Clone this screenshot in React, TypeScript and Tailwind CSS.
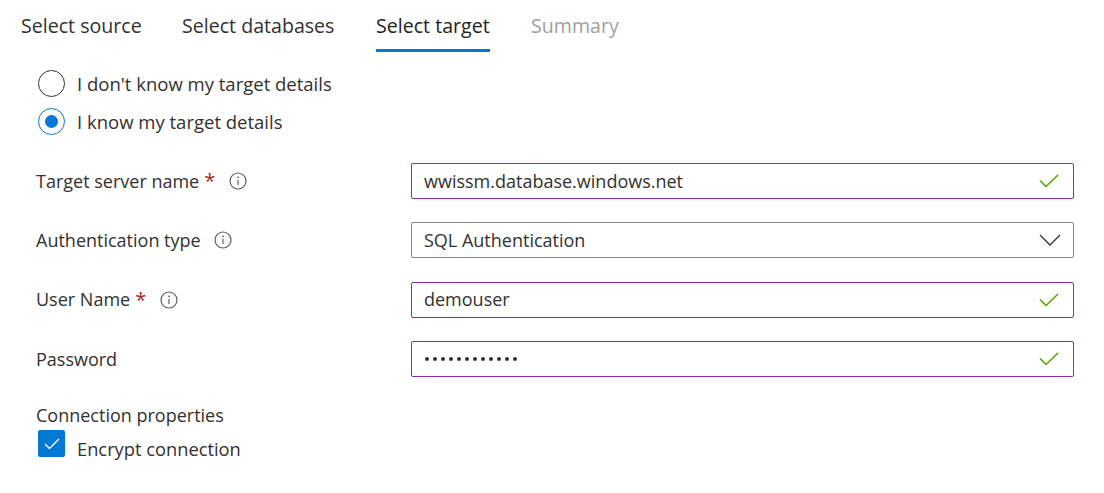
const font = { fontFamily: '"Open Sans", "Noto Sans", sans-serif' }

function Check() {
    return (
        <svg width="20" height="14" viewBox="0 0 20 14" className="shrink-0">
            <path d="M1 6.5 L7 12.5 L19 1" fill="none" stroke="#57a300" strokeWidth="1.6" />
        </svg>
    )
}

function Chevron() {
    return (
        <svg width="22" height="12" viewBox="0 0 22 12" className="shrink-0 mr-[-2px]">
            <path d="M1 1 L11 11 L21 1" fill="none" stroke="#323130" strokeWidth="1.3" />
        </svg>
    )
}

function Info() {
    return (
        <svg width="18" height="18" viewBox="0 0 18 18" className="shrink-0">
            <circle cx="9" cy="9" r="8" fill="none" stroke="#605e5c" strokeWidth="1.2" />
            <circle cx="9" cy="5.3" r="0.9" fill="#605e5c" />
            <path d="M9 7.8 V13" stroke="#605e5c" strokeWidth="1.2" />
        </svg>
    )
}

function Label({ text, required, info }: { text: string; required?: boolean; info?: boolean }) {
    return (
        <div className="w-[375px] flex items-center text-[18px] text-[#323130]">
            <span>{text}</span>
            {required && <span className="ml-[5px] text-[#a4262c] text-[20px] leading-none">*</span>}
            {info && (
                <span className={required ? "ml-[14px] flex" : "ml-[13px] flex"}>
                    <Info />
                </span>
            )}
        </div>
    )
}

function Field({ value, select, dots }: { value: string; select?: boolean; dots?: boolean }) {
    return (
        <div
            className={
                "w-[663px] h-[36px] rounded-[2px] border flex items-center pl-[12px] pr-[14px] justify-between " +
                (select ? "border-[#8a8886]" : "border-[#8a2da5]")
            }
        >
            {dots ? (
                <span className="flex gap-[4px] pl-[1px]">
                    {Array.from({ length: 12 }).map((_, i) => (
                        <span key={i} className="w-[4px] h-[4px] rounded-full bg-[#323130]" />
                    ))}
                </span>
            ) : (
                <span className="text-[#323130] text-[18px]">{value}</span>
            )}
            {select ? <Chevron /> : <Check />}
        </div>
    )
}

export default function App() {
    const tabs = [
        { name: "Select source", w: "w-[161px]", state: "done" },
        { name: "Select databases", w: "w-[194px]", state: "done" },
        { name: "Select target", w: "w-[155px]", state: "active" },
        { name: "Summary", w: "w-[100px]", state: "todo" },
    ]

    const rows = [
        { label: "Target server name", required: true, info: true, value: "wwissm.database.windows.net" },
        { label: "Authentication type", info: true, value: "SQL Authentication", select: true },
        { label: "User Name", required: true, info: true, value: "demouser" },
        { label: "Password", value: "", dots: true },
    ]

    return (
        <div className="w-[1104px] h-[493px] bg-white" style={font}>
            <div className="flex pl-[21px] pt-[11px]">
                {tabs.map((t) => (
                    <div key={t.name} className={t.w}>
                        <div className="inline-flex flex-col">
                            <span
                                className={
                                    "text-[19.6px] leading-[30px] " +
                                    (t.state === "active"
                                        ? "text-[#201f1e] font-medium"
                                        : t.state === "done"
                                          ? "text-[#323130]"
                                          : "text-[#a19f9d]")
                                }
                            >
                                {t.name}
                            </span>
                            <div
                                className={
                                    "h-[3px] mt-[8px] " + (t.state === "active" ? "bg-[#0078d4]" : "bg-transparent")
                                }
                            />
                        </div>
                    </div>
                ))}
            </div>

            <div className="pl-[38px] pt-[18px] flex flex-col gap-[11px]">
                <label className="flex items-center gap-[12px] h-[27px]">
                    <span className="w-[27px] h-[27px] rounded-full border border-[#323130]" />
                    <span className="text-[18.5px] leading-[27px] text-[#323130]">I don't know my target details</span>
                </label>
                <label className="flex items-center gap-[12px] h-[27px]">
                    <span className="w-[27px] h-[27px] rounded-full border border-[#0078d4] flex items-center justify-center">
                        <span className="w-[13px] h-[13px] rounded-full bg-[#0078d4]" />
                    </span>
                    <span className="text-[18.5px] leading-[27px] text-[#323130]">I know my target details</span>
                </label>
            </div>

            <div className="pl-[36px] pt-[28px] flex flex-col gap-[23.4px]">
                {rows.map((r) => (
                    <div key={r.label} className="flex items-center">
                        <Label text={r.label} required={r.required} info={r.info} />
                        <Field value={r.value} select={r.select} dots={r.dots} />
                    </div>
                ))}
            </div>

            <div className="pl-[36px] pt-[25px]">
                <div className="text-[18px] text-[#323130] leading-[26px]">Connection properties</div>
                <label className="flex items-start gap-[12px] ml-[2px] mt-[2px]">
                    <span className="w-[27px] h-[27px] rounded-[2px] bg-[#0078d4] flex items-center justify-center">
                        <svg width="16" height="12" viewBox="0 0 16 12">
                            <path d="M1 6 L5.5 10.5 L15 1" fill="none" stroke="white" strokeWidth="1.4" />
                        </svg>
                    </span>
                    <span className="text-[18.3px] text-[#323130] mt-[5px]">Encrypt connection</span>
                </label>
            </div>
        </div>
    )
}
